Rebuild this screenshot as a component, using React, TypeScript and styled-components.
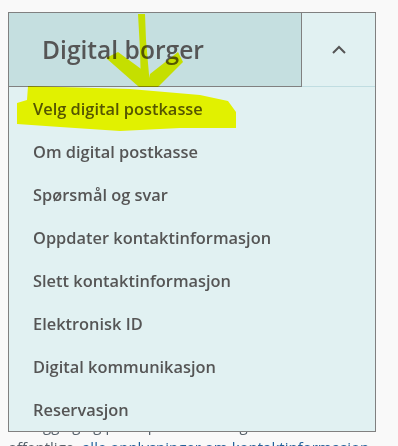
import styled, { createGlobalStyle } from "styled-components";

const GlobalStyle = createGlobalStyle`
    html, body {
        margin: 0;
        padding: 0;
        background: #f9f9f9;
        font-family: "Open Sans", "Liberation Sans", sans-serif;
    }
`

const menuItems = [
    "Velg digital postkasse",
    "Om digital postkasse",
    "Spørsmål og svar",
    "Oppdater kontaktinformasjon",
    "Slett kontaktinformasjon",
    "Elektronisk ID",
    "Digital kommunikasjon",
    "Reservasjon",
]

export const Page = styled.div`
    position: relative;
    width: 398px;
    height: 446px;
    overflow: hidden;
`

export const BodyText = styled.p`
    margin: 0;
    padding: 392px 0 0 8px;
    width: 370px;
    font-size: 15px;
    line-height: 22px;
    color: #55606a;
`

export const Link = styled.a`
    color: #1f5f9a;
`

export const Dropdown = styled.nav`
    position: absolute;
    top: 12px;
    left: 8px;
    width: 366px;
    border: 1px solid #808080;
    background: #e1f1f2;
`

export const Header = styled.div`
    display: flex;
    height: 74px;
`

export const Title = styled.div`
    width: 293px;
    box-sizing: border-box;
    display: flex;
    align-items: center;
    padding-left: 33px;
    background: #c5dfe0;
    border-right: 1px solid #808080;
    border-bottom: 1px solid #808080;
    font-size: 24.6px;
    font-weight: 600;
    color: #555555;
`

export const Toggle = styled.button`
    flex: 1;
    display: flex;
    align-items: center;
    justify-content: center;
    padding: 0;
    border: none;
    border-bottom: 1px solid #c0dde1;
    background: #e1f1f2;
    cursor: pointer;
`

export const List = styled.ul`
    list-style: none;
    margin: 0;
    padding: 0;
`

export const Item = styled.li`
    height: 43px;
    display: flex;
    align-items: center;
    padding-left: 24px;
    font-size: 16.4px;
    font-weight: 600;
    color: #555555;
`

export const Marker = styled.svg`
    position: absolute;
    top: 0;
    left: 0;
    pointer-events: none;
    mix-blend-mode: multiply;
`

const App = () => {
    return (
        <Page>
            <GlobalStyle />
            <BodyText>
                Her finner du informasjon om digital postkasse og
                innlogging og post i postkassen og kontakt med det offentlige,
                <Link> alle opplysninger om kontaktinformasjon til</Link> offentlige
                virksomheter.
            </BodyText>
            <Dropdown>
                <Header>
                    <Title>Digital borger</Title>
                    <Toggle aria-label="Lukk meny">
                        <svg width="16" height="10" viewBox="0 0 16 10">
                            <path d="M2 8 L8 2 L14 8" fill="none" stroke="#555555" strokeWidth="2" />
                        </svg>
                    </Toggle>
                </Header>
                <List>
                    {menuItems.map((item) => (
                        <Item key={item}>{item}</Item>
                    ))}
                </List>
            </Dropdown>
            <Marker width="398" height="446" viewBox="0 0 398 446">
                <g fill="#ffff00">
                    <polygon points="138,14 145,14 146,40 150,86 141,86 140,50" />
                    <polygon points="106,58 118,52 148,74 150,87 139,87" />
                    <polygon points="178,52 183,62 158,87 147,87 150,74" />
                    <polygon points="28,86 60,87 130,89 200,95 228,101 236,112 236,128 180,128 120,131 60,127 17,124 17,103 27,100" />
                </g>
            </Marker>
        </Page>
    )
}

export default App;
